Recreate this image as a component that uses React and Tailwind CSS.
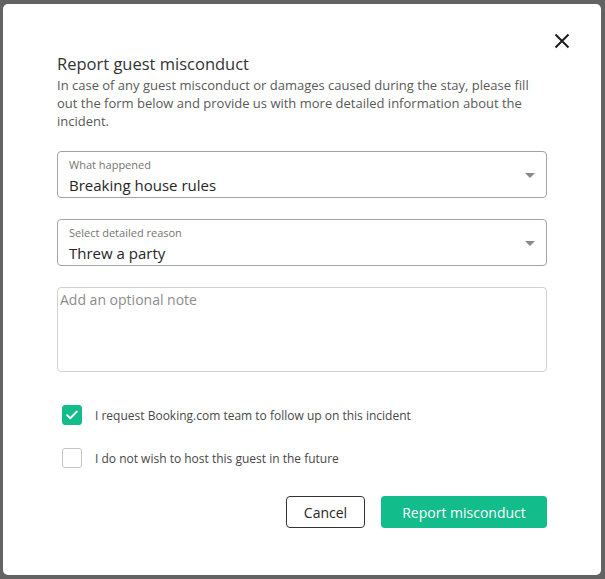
import { useState } from "react";

function SelectField({ label, value }) {
  return (
    <div className="relative h-[47px] rounded-[4px] border border-[#a3a3a3] pl-[11px] pr-4 pt-[6px] flex flex-col">
      <span className="text-[11px] leading-[14px] text-[#757575]">{label}</span>
      <span className="mt-[3px] text-[15px] leading-[20px] text-[#262626]">{value}</span>
      <span className="absolute right-[11px] top-[21px] w-0 h-0 border-l-[5px] border-r-[5px] border-t-[5px] border-l-transparent border-r-transparent border-t-[#8a8a8a]" />
    </div>
  );
}

function Check({ checked, label, onChange }) {
  return (
    <label className="flex items-center gap-[13px] pl-[5px] cursor-pointer">
      <button
        type="button"
        onClick={onChange}
        className={`${checked ? "bg-[#12bc8b] border-[#12bc8b]" : "bg-white border-[#c4c4c4]"} w-5 h-5 rounded-[3px] border flex items-center justify-center`}
      >
        {checked && (
          <svg width="12" height="10" viewBox="0 0 12 10" fill="none">
            <path d="M1.2 5.2 L4.3 8.2 L10.8 1.6" stroke="white" strokeWidth="2" strokeLinecap="round" strokeLinejoin="round" />
          </svg>
        )}
      </button>
      <span className="text-[12px] leading-[16px] text-[#474747] pt-[1px]">{label}</span>
    </label>
  );
}

export default function App() {
  const [followUp, setFollowUp] = useState(true);
  const [noHost, setNoHost] = useState(false);

  return (
    <main
      className="w-[605px] h-[579px] bg-[#636363] pt-[4px] pl-[3px] overflow-hidden"
      style={{ fontFamily: '"Open Sans", "Noto Sans", sans-serif' }}
    >
      <div className="w-[598px] h-[571px] bg-white rounded-[5px] px-[54px] pt-[29px] flex flex-col">
        <div className="flex justify-end -mr-[25px] h-[19px]">
          <button type="button" className="w-[20px] h-[18px] flex items-start justify-center">
            <svg width="16" height="16" viewBox="0 0 16 16" fill="none">
              <path d="M1.5 1.5 L14.5 14.5 M14.5 1.5 L1.5 14.5" stroke="#1c1c1c" strokeWidth="2" />
            </svg>
          </button>
        </div>
        <h2 className="text-[16.5px] leading-[24px] text-[#333333]">Report guest misconduct</h2>
        <p className="text-[13px] leading-[18px] text-[#595959]">
          In case of any guest misconduct or damages caused during the stay, please fill out the form below and provide us with more detailed information about the incident.
        </p>

        <div className="mt-[21px] flex flex-col gap-[21px]">
          <SelectField label="What happened" value="Breaking house rules" />
          <SelectField label="Select detailed reason" value="Threw a party" />
          <textarea
            placeholder="Add an optional note"
            className="h-[85px] rounded-[4px] border border-[#d1d1d1] px-[2px] pt-[2px] text-[14px] leading-[20px] text-[#333] placeholder:text-[#8c8c8c] resize-none outline-none"
          />
        </div>

        <div className="mt-[33px] flex flex-col gap-[23px]">
          <Check checked={followUp} onChange={() => setFollowUp(!followUp)} label="I request Booking.com team to follow up on this incident" />
          <Check checked={noHost} onChange={() => setNoHost(!noHost)} label="I do not wish to host this guest in the future" />
        </div>

        <div className="mt-[28px] flex justify-end gap-4">
          <button type="button" className="w-[79px] h-[32px] rounded-[4px] border border-[#333] text-[14px] text-[#262626]">
            Cancel
          </button>
          <button type="button" className="w-[166px] h-[32px] rounded-[4px] bg-[#12bc8b] text-[14px] font-medium text-white">
            Report misconduct
          </button>
        </div>
      </div>
    </main>
  );
}
